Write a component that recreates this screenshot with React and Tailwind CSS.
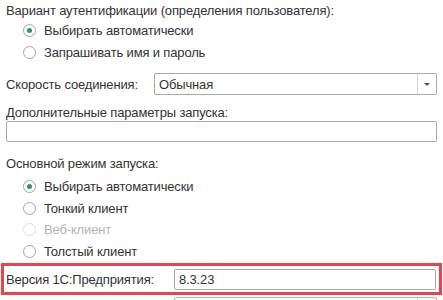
import React from 'react';

const Radio = ({ checked, disabled, label }) => (
  <div className="flex items-center h-[21.5px] pl-[23px]">
    <span
      className={`w-[13px] h-[13px] rounded-full border bg-white flex items-center justify-center shrink-0 ${
        disabled ? 'border-[#dcdcdc]' : 'border-[#a3a3a3]'
      }`}
    >
      {checked && <span className="w-[5px] h-[5px] rounded-full bg-[#2f9a57]" />}
    </span>
    <span className={`ml-[8px] ${disabled ? 'text-[#b3b3b3]' : 'text-[#333333]'}`}>{label}</span>
  </div>
);

const App = () => {
  return (
    <div className="w-[443px] h-[300px] overflow-hidden bg-white text-[13px] leading-none tracking-[-0.15px] text-[#333333] font-['Liberation_Sans',Arial,sans-serif]">
      <div className="h-[20px] flex items-center pl-[6px]">Вариант аутентификации (определения пользователя):</div>
      <Radio checked label="Выбирать автоматически" />
      <Radio label="Запрашивать имя и пароль" />

      <div className="mt-[10px] flex items-center h-[22px] pl-[6px] pr-[6px]">
        <span className="w-[148px]">Скорость соединения:</span>
        <div className="flex-1 h-full flex items-stretch border border-[#a9a9a9] rounded-[2px]">
          <span className="flex-1 flex items-center pl-[4px]">Обычная</span>
          <span className="w-[19px] border-l border-[#d4d4d4] flex items-center justify-center">
            <span className="w-0 h-0 border-l-[3px] border-r-[3px] border-t-[3px] border-l-transparent border-r-transparent border-t-[#555555]" />
          </span>
        </div>
      </div>

      <div className="mt-[8px] h-[18px] flex items-center pl-[6px]">Дополнительные параметры запуска:</div>
      <div className="mx-[6px] h-[21px] border border-[#a9a9a9] rounded-[2px]" />

      <div className="mt-[11px] h-[20px] flex items-center pl-[6px]">Основной режим запуска:</div>
      <div className="mt-[3px]">
        <Radio checked label="Выбирать автоматически" />
        <Radio label="Тонкий клиент" />
        <Radio disabled label="Веб-клиент" />
        <Radio label="Толстый клиент" />
      </div>

      <div className="mt-[1px] mx-[1px] h-[32px] border-[3px] border-[#e6454b] flex items-center pl-[2px] pr-[3px]">
        <span className="w-[168px]">Версия 1С:Предприятия:</span>
        <div className="flex-1 h-[21px] border border-[#a9a9a9] rounded-[2px] flex items-center pl-[4px]">8.3.23</div>
      </div>
      <div className="mt-[2px] ml-[174px] mr-[6px] h-[20px] border border-[#b5b5b5] rounded-[2px] flex justify-end">
        <span className="w-[19px] border-l border-[#d4d4d4]" />
      </div>
    </div>
  );
};

export default App;
